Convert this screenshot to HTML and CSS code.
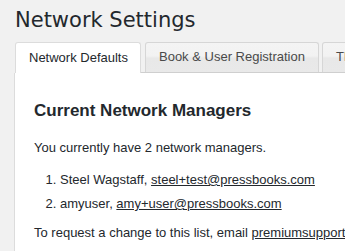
FILE: index.html
```html
<!DOCTYPE html>
<html>
<head>
<meta charset="utf-8">
<link rel="stylesheet" href="styles.css">
</head>
<body>
<div class="wrap">
  <h1 class="title">Network Settings</h1>
  <div class="tabs">
    <a class="tab active">Network Defaults</a>
    <a class="tab">Book &amp; User Registration</a>
    <a class="tab">Theme Settings</a>
  </div>
  <div class="panel">
    <h2 class="panel-title">Current Network Managers</h2>
    <p class="text">You currently have 2 network managers.</p>
    <ol class="list">
      <li>Steel Wagstaff, <a class="link">steel+test@pressbooks.com</a></li>
      <li>amyuser, <a class="link">amy+user@pressbooks.com</a></li>
    </ol>
    <p class="text">To request a change to this list, email <a class="link">premiumsupport@pressbooks.com</a>.</p>
  </div>
</div>
</body>
</html>
```

FILE: styles.css
```css
html, body {
  margin: 0;
  padding: 0;
  background: #f1f1f1;
  overflow: hidden;
}
.wrap {
  padding-left: 14px;
  width: 600px;
  font-family: "Liberation Sans", Arial, sans-serif;
  color: #23282d;
}
.title {
  margin: 0;
  padding: 5px 0 0 1px;
  height: 37px;
  font-family: "DejaVu Sans", sans-serif;
  font-weight: 400;
  font-size: 21px;
  line-height: 30px;
  color: #23282d;
}
.tabs {
  display: flex;
  align-items: flex-end;
  height: 30px;
  border-bottom: 1px solid #cfcfcf;
  margin-left: 1px;
}
.tab {
  display: block;
  box-sizing: border-box;
  height: 30px;
  padding: 0 13px;
  margin-right: 3px;
  font-size: 13px;
  line-height: 28px;
  color: #4a4a4a;
  border: 1px solid #d6d6d6;
  border-bottom: none;
  border-radius: 3px 3px 0 0;
  background: linear-gradient(to bottom, #f4f4f4 0%, #f2f2f2 45%, #e8e8e8 52%, #e9e9e9 100%);
  white-space: nowrap;
}
.tab.active {
  height: 31px;
  margin-bottom: -1px;
  margin-right: 4px;
  background: #fff;
  color: #23282d;
  border-color: #dcdcdc;
  padding: 0 12px 0 13px;
  line-height: 30px;
}
.panel {
  background: #fff;
  border-left: 1px solid #dcdcdc;
  padding: 26px 19px 20px 19px;
}
.panel-title {
  margin: 0;
  font-size: 17px;
  font-weight: 700;
  line-height: 24px;
  color: #23282d;
}
.text {
  margin: 0;
  padding-top: 15px;
  font-size: 13px;
  line-height: 20px;
  color: #23282d;
}
.list {
  margin: 0;
  padding: 12px 0 0 26px;
  font-size: 13px;
  line-height: 20px;
}
.list li {
  margin-bottom: 4px;
}
.list + .text {
  padding-top: 5px;
}
.link {
  color: #23282d;
  text-decoration: underline;
}
```
